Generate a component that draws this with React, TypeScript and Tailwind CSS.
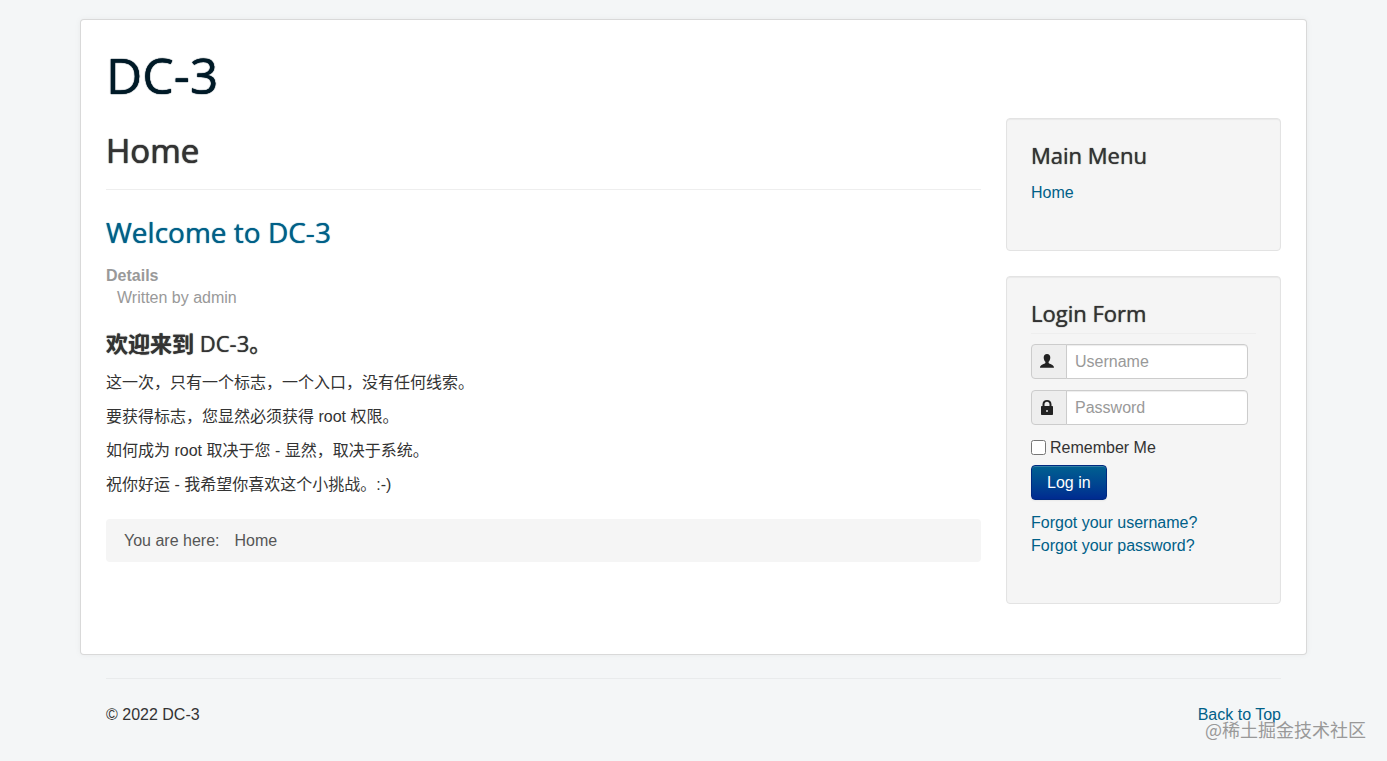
import React from "react";

const paragraphs = [
  "这一次，只有一个标志，一个入口，没有任何线索。",
  "要获得标志，您显然必须获得 root 权限。",
  "如何成为 root 取决于您 - 显然，取决于系统。",
  "祝你好运 - 我希望你喜欢这个小挑战。:-)",
];

const heading =
  "font-['Open_Sans','Noto_Sans_CJK_SC',sans-serif] [text-shadow:0_0_1px_currentColor,0_0_1px_currentColor]";
const smallHeading =
  "font-['Open_Sans','Noto_Sans_CJK_SC',sans-serif] [text-shadow:0_0_1px_currentColor]";
const link = "text-[#006088] hover:underline";

const UserIcon = () => (
  <svg viewBox="0 0 16 16" className="size-4" fill="#222" aria-hidden="true">
    <path d="M8 0C5.900 0 4.600 1.500 4.700 3.700C4.800 5.700 5.600 7 6.400 7.800V9C6 10 1 10.300 1 13.700H15C15 10.300 10 10 9.600 9V7.800C10.400 7 11.200 5.700 11.300 3.700C11.400 1.500 10.100 0 8 0Z" />
  </svg>
);

const LockIcon = () => (
  <svg viewBox="0 0 16 16" className="size-4" fill="#222" aria-hidden="true">
    <path
      fillRule="evenodd"
      d="M3.500 6V4.300C3.500 1.500 5.400 0 8 0S12.500 1.500 12.500 4.300V6H13.200Q14 6 14 6.800V14.200Q14 15 13.200 15H2.800Q2 15 2 14.200V6.800Q2 6 2.800 6ZM5.500 6H10.500V4.300C10.500 2.700 9.500 1.800 8 1.800S5.500 2.700 5.500 4.300ZM7.300 10V12H8.700V10Z"
    />
  </svg>
);

const Panel = ({
  title,
  children,
}: {
  title: string;
  children: React.ReactNode;
}) => (
  <section className="mb-[25px] rounded border border-[#e3e3e3] bg-[#f5f5f5] p-6 shadow-[inset_0_1px_1px_rgba(0,0,0,0.05)]">
    <h3 className={`${smallHeading} text-[22px] leading-[24px]`}>{title}</h3>
    {children}
  </section>
);

const Field = ({
  id,
  label,
  type,
  icon,
}: {
  id: string;
  label: string;
  type: string;
  icon: React.ReactNode;
}) => (
  <div className="mb-[11px] flex w-[217px]">
    <label
      htmlFor={id}
      aria-label={label}
      className="flex w-9 shrink-0 items-center justify-center rounded-l border border-[#ccc] bg-[#eee] pr-1"
    >
      {icon}
    </label>
    <input
      id={id}
      type={type}
      placeholder={label}
      className="-ml-px h-[35px] w-full min-w-0 rounded-r border border-[#ccc] bg-white px-2 shadow-[inset_0_1px_1px_rgba(0,0,0,0.075)] placeholder:text-[#999]"
    />
  </div>
);

const App = () => {
  return (
    <div
      id="top"
      className="relative min-h-screen bg-[#f4f6f7] px-5 pt-[19px] font-['Liberation_Sans','Noto_Sans_CJK_SC',sans-serif] text-[16px] leading-[23px] text-[#333]"
    >
      <div className="mx-auto max-w-[1227px] rounded border border-black/15 bg-white px-[25px] pt-[25px] pb-[25px] shadow-[0_0_6px_rgba(0,0,0,0.05)]">
        <header className="mb-[13px]">
          <h1
            className={`${heading} text-[50px] leading-[60px] text-[#001a27]`}
          >
            DC-3
          </h1>
        </header>

        <div className="flex gap-[25px]">
          <main className="min-w-0 flex-1">
            <h2
              className={`${heading} border-b border-[#eee] pt-[9px] pb-[14px] text-[33px] leading-[48px]`}
            >
              Home
            </h2>
            <h2
              className={`${smallHeading} mt-[22px] mb-[13px] text-[28px] leading-[40px]`}
            >
              <a href="#welcome" className={link}>
                Welcome to DC-3
              </a>
            </h2>
            <dl className="mb-[21px] leading-[22px] text-[#999]">
              <dt className="font-bold">Details</dt>
              <dd className="ml-[11px]">Written by admin</dd>
            </dl>
            <h3
              className={`${smallHeading} mb-[15px] text-[22px] leading-[26px]`}
            >
              <b>欢迎来到</b> DC-3。
            </h3>
            {paragraphs.map((text) => (
              <p key={text} className="mb-[11px]">
                {text}
              </p>
            ))}
            <ul className="mt-[23px] flex gap-[15px] rounded bg-[#f5f5f5] px-[18px] py-[10px] text-[#555]">
              <li>You are here:</li>
              <li>Home</li>
            </ul>
          </main>

          <aside className="w-[275px] shrink-0">
            <Panel title="Main Menu">
              <ul className="mt-[14px] mb-[22px]">
                <li>
                  <a href="#home" className={link}>
                    Home
                  </a>
                </li>
              </ul>
            </Panel>
            <Panel title="Login Form">
              <form
                className="mt-[8px] border-t border-[#eee] pt-[10px]"
                onSubmit={(e) => e.preventDefault()}
              >
                <Field
                  id="username"
                  label="Username"
                  type="text"
                  icon={<UserIcon />}
                />
                <Field
                  id="password"
                  label="Password"
                  type="password"
                  icon={<LockIcon />}
                />
                <label className="flex items-center gap-1">
                  <input type="checkbox" className="size-[15px]" />
                  Remember Me
                </label>
                <button
                  type="submit"
                  className="mt-[6px] h-[35px] rounded border border-[#002a80] bg-linear-to-b from-[#006090] to-[#002a90] px-[15px] text-white shadow-[inset_0_1px_0_rgba(255,255,255,0.2),0_1px_2px_rgba(0,0,0,0.05)]"
                >
                  Log in
                </button>
                <ul className="mt-[11px] mb-[22px]">
                  <li>
                    <a href="#username" className={link}>
                      Forgot your username?
                    </a>
                  </li>
                  <li>
                    <a href="#password" className={link}>
                      Forgot your password?
                    </a>
                  </li>
                </ul>
              </form>
            </Panel>
          </aside>
        </div>
      </div>

      <footer className="mx-auto mt-[23px] max-w-[1227px] px-[26px]">
        <div className="flex justify-between border-t border-[#e9ebec] pt-6">
          <p>© 2022 DC-3</p>
          <a href="#top" className={link}>
            Back to Top
          </a>
        </div>
      </footer>

      <span className="pointer-events-none absolute right-[21px] bottom-5 font-['Noto_Sans_CJK_SC',sans-serif] text-[18px] text-[#999]">
        @稀土掘金技术社区
      </span>
    </div>
  );
};

export default App;
